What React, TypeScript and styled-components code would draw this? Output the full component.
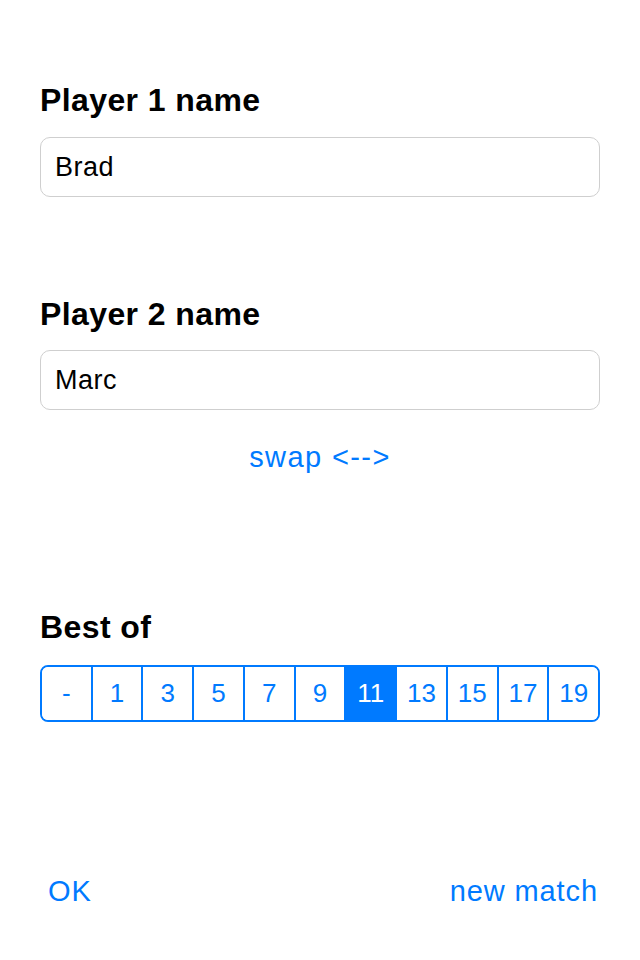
import React from "react";
import styled, { createGlobalStyle } from "styled-components";

const Global = createGlobalStyle`
  html, body { margin: 0; padding: 0; background: #fff; }
  body { font-family: "Liberation Sans", Arial, sans-serif; -webkit-font-smoothing: antialiased; }
`;

const Page = styled.div`
  width: 640px;
  height: 960px;
  box-sizing: border-box;
  padding: 82px 40px 0 40px;
  display: flex;
  flex-direction: column;
`;

const Label = styled.div<{ $mt?: number }>`
  font-size: 32px;
  line-height: 36px;
  font-weight: bold;
  color: #000;
  margin-top: ${(p) => p.$mt ?? 0}px;
  letter-spacing: 0.4px;
`;

const Field = styled.div<{ $mt?: number }>`
  margin-top: ${(p) => p.$mt ?? 0}px;
  height: 60px;
  box-sizing: border-box;
  border: 1px solid #cfcfcf;
  border-radius: 10px;
  display: flex;
  align-items: center;
  padding: 0 14px;
  font-size: 27px;
  letter-spacing: 0.5px;
  color: #000;
`;

const Swap = styled.div`
  margin-top: 30px;
  text-align: center;
  font-size: 29px;
  line-height: 34px;
  letter-spacing: 1.4px;
  color: #007aff;
`;

const Segmented = styled.div`
  margin-top: 20px;
  height: 57px;
  box-sizing: border-box;
  border: 2px solid #007aff;
  border-radius: 8px;
  overflow: hidden;
  display: flex;
`;

const Segment = styled.div<{ $active?: boolean }>`
  flex: 1;
  display: flex;
  align-items: center;
  justify-content: center;
  font-size: 26px;
  color: ${(p) => (p.$active ? "#fff" : "#007aff")};
  background: ${(p) => (p.$active ? "#007aff" : "#fff")};
  & + & {
    border-left: 2px solid #007aff;
  }
`;

const Footer = styled.div`
  margin-top: auto;
  margin-bottom: 52px;
  display: flex;
  justify-content: space-between;
  padding: 0 2px 0 8px;
`;

const Link = styled.div`
  font-size: 29px;
  line-height: 34px;
  letter-spacing: 0.9px;
  color: #007aff;
`;

const options = ["-", "1", "3", "5", "7", "9", "11", "13", "15", "17", "19"];

export default function App() {
  return (
    <>
      <Global />
      <Page>
        <Label>Player 1 name</Label>
        <Field $mt={19}>Brad</Field>
        <Label $mt={99}>Player 2 name</Label>
        <Field $mt={18}>Marc</Field>
        <Swap>swap &lt;--&gt;</Swap>
        <Label $mt={135}>Best of</Label>
        <Segmented>
          {options.map((o) => (
            <Segment key={o} $active={o === "11"}>
              {o}
            </Segment>
          ))}
        </Segmented>
        <Footer>
          <Link>OK</Link>
          <Link>new match</Link>
        </Footer>
      </Page>
    </>
  );
}
